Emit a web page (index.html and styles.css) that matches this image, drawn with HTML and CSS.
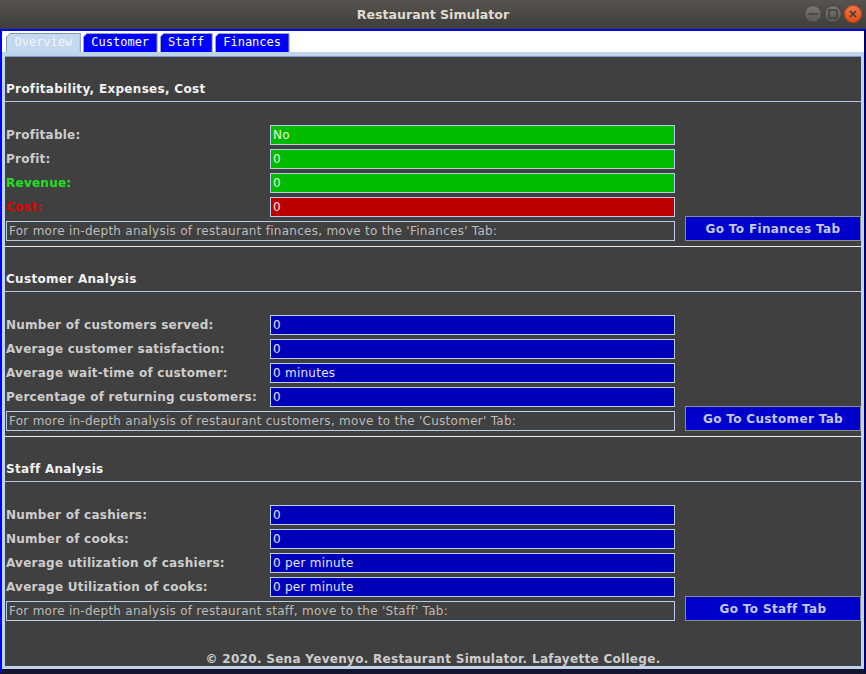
FILE: index.html
```html
<!DOCTYPE html>
<html>
<head>
<meta charset="utf-8">
<title>Restaurant Simulator</title>
<link rel="stylesheet" href="styles.css">
</head>
<body>
<div class="titlebar">
  <div class="title">Restaurant Simulator</div>
  <div class="controls">
    <span class="ctl"><svg width="18" height="18" viewBox="0 0 18 18"><line x1="4.5" y1="9" x2="13.5" y2="9" stroke="#3c3b37" stroke-width="1.5"/></svg></span>
    <span class="ctl"><svg width="18" height="18" viewBox="0 0 18 18"><rect x="5" y="5" width="8" height="8" fill="none" stroke="#3c3b37" stroke-width="1.3"/></svg></span>
    <span class="ctl close"><svg width="18" height="18" viewBox="0 0 18 18"><path d="M6 6 L12 12 M12 6 L6 12" stroke="#3c3b37" stroke-width="1.5"/></svg></span>
  </div>
</div>
<div class="window">
  <div class="tabs">
    <div class="tab selected"><span>Overview</span></div>
    <div class="tab"><span>Customer</span></div>
    <div class="tab"><span>Staff</span></div>
    <div class="tab"><span>Finances</span></div>
  </div>
  <div class="panel">
    <section class="section first">
      <h2 class="heading">Profitability, Expenses, Cost</h2>
      <div class="rows">
        <div class="row"><span class="label">Profitable:</span><span class="field green">No</span></div>
        <div class="row"><span class="label">Profit:</span><span class="field green">0</span></div>
        <div class="row"><span class="label revenue">Revenue:</span><span class="field green">0</span></div>
        <div class="row"><span class="label cost">Cost:</span><span class="field red">0</span></div>
      </div>
      <div class="more">
        <div class="info">For more in-depth analysis of restaurant finances, move to the 'Finances' Tab:</div>
        <button class="go">Go To Finances Tab</button>
      </div>
    </section>
    <section class="section">
      <h2 class="heading">Customer Analysis</h2>
      <div class="rows">
        <div class="row"><span class="label">Number of customers served:</span><span class="field blue">0</span></div>
        <div class="row"><span class="label">Average customer satisfaction:</span><span class="field blue">0</span></div>
        <div class="row"><span class="label">Average wait-time of customer:</span><span class="field blue">0 minutes</span></div>
        <div class="row"><span class="label">Percentage of returning customers:</span><span class="field blue">0</span></div>
      </div>
      <div class="more">
        <div class="info">For more in-depth analysis of restaurant customers, move to the 'Customer' Tab:</div>
        <button class="go">Go To Customer Tab</button>
      </div>
    </section>
    <section class="section">
      <h2 class="heading">Staff Analysis</h2>
      <div class="rows">
        <div class="row"><span class="label">Number of cashiers:</span><span class="field blue">0</span></div>
        <div class="row"><span class="label">Number of cooks:</span><span class="field blue">0</span></div>
        <div class="row"><span class="label">Average utilization of cashiers:</span><span class="field blue">0 per minute</span></div>
        <div class="row"><span class="label">Average Utilization of cooks:</span><span class="field blue">0 per minute</span></div>
      </div>
      <div class="more">
        <div class="info">For more in-depth analysis of restaurant staff, move to the 'Staff' Tab:</div>
        <button class="go">Go To Staff Tab</button>
      </div>
    </section>
    <footer class="footer">© 2020. Sena Yevenyo. Restaurant Simulator. Lafayette College.</footer>
  </div>
</div>
</body>
</html>
```
FILE: styles.css
```css
* { box-sizing: border-box; }
html, body { margin: 0; padding: 0; }
body {
  width: 866px;
  height: 674px;
  overflow: hidden;
  background: #3c3b37;
  font-family: "DejaVu Sans", sans-serif;
}
.titlebar {
  height: 29px;
  position: relative;
  display: flex;
  align-items: center;
  justify-content: center;
  background: linear-gradient(#57544f, #3e3d39);
}
.title {
  color: #dfdbd2;
  font-weight: bold;
  font-size: 12.6px;
}
.controls {
  position: absolute;
  right: 4px;
  top: 5px;
  display: flex;
  gap: 2px;
}
.ctl {
  width: 18px;
  height: 18px;
  border-radius: 50%;
  background: linear-gradient(#7d7a75, #55534f);
  box-shadow: inset 0 0 0 1px #3a3935;
  display: flex;
}
.ctl.close {
  background: linear-gradient(#f07748, #df4b17);
  box-shadow: inset 0 0 0 1px #a83c16;
}
.window {
  height: 645px;
  background: #ffffff;
  border-top: 2px solid #0000ff;
  border-left: 2px solid #0000ff;
  border-right: 2px solid #000070;
  border-bottom: 5px solid #15152e;
  display: flex;
  flex-direction: column;
}
.tabs {
  height: 21px;
  display: flex;
  align-items: flex-end;
  padding-left: 4px;
  gap: 2px;
}
.tab {
  height: 19px;
  padding: 1px 1px 0 1px;
  background: #9aa4b4;
  clip-path: polygon(4px 0, 100% 0, 100% 100%, 0 100%, 0 4px);
}
.tab span {
  display: block;
  height: 100%;
  padding: 0 7.5px;
  background: #0000ff;
  color: #ffffff;
  font-family: "DejaVu Sans Mono", monospace;
  font-size: 12px;
  line-height: 17px;
  clip-path: polygon(3px 0, 100% 0, 100% 100%, 0 100%, 0 3px);
}
.tab.selected { background: #7f97bf; }
.tab.selected span {
  background: #c4d8ee;
  color: #f2f6fc;
}
.panel {
  flex: 1;
  background: #404040;
  border-style: solid;
  border-color: #bfd3eb;
  border-width: 4px 3px 3px 3px;
  display: flex;
  flex-direction: column;
}
.section {
  height: 190px;
  border-top: 1px solid #e6edf7;
  display: flex;
  flex-direction: column;
}
.section.first { border-top-color: #7c98c6; }
.heading {
  margin: 0;
  height: 45px;
  padding: 25px 0 4px 1px;
  border-bottom: 1px solid #b4c8e4;
  color: #f2f2f2;
  font-size: 12px;
  line-height: 15px;
  font-weight: bold;
  letter-spacing: 0.3px;
}
.rows {
  margin-top: 23px;
  display: flex;
  flex-direction: column;
  gap: 4px;
}
.row {
  display: flex;
  align-items: center;
  height: 20px;
}
.label {
  width: 265px;
  padding-left: 1px;
  color: #cdcdcd;
  font-size: 12px;
  font-weight: bold;
  letter-spacing: 0.25px;
}
.label.revenue { color: #22e022; }
.label.cost { color: #e00000; }
.field {
  width: 405px;
  height: 20px;
  border: 1px solid #b8cce4;
  padding-left: 2px;
  font-size: 12px;
  line-height: 18px;
  letter-spacing: 0.25px;
  color: #e6f0ff;
}
.field.green { background: #00bb00; color: #e4f4e4; }
.field.red { background: #bb0000; color: #f4e4e4; }
.field.blue { background: #0000bb; color: #e4e4f8; }
.more {
  display: flex;
  align-items: flex-end;
  height: 25px;
  margin-top: -1px;
}
.info {
  margin-left: 1px;
  width: 669px;
  height: 20px;
  border: 1px solid #b8cce4;
  padding-left: 2px;
  color: #bcbcbc;
  font-size: 12px;
  line-height: 18px;
  letter-spacing: 0.27px;
  white-space: nowrap;
  overflow: hidden;
}
.go {
  margin-left: 10px;
  width: 176px;
  height: 25px;
  background: #0000cc;
  border: 1px solid #8a8a8a;
  color: #c4c8ec;
  font-family: "DejaVu Sans", sans-serif;
  font-size: 12px;
  font-weight: bold;
  letter-spacing: 0.35px;
  padding: 0;
}
.footer {
  height: 40px;
  padding-top: 26px;
  text-align: center;
  color: #cdcdcd;
  font-size: 12px;
  line-height: 15px;
  font-weight: bold;
  letter-spacing: 0.3px;
}
```
